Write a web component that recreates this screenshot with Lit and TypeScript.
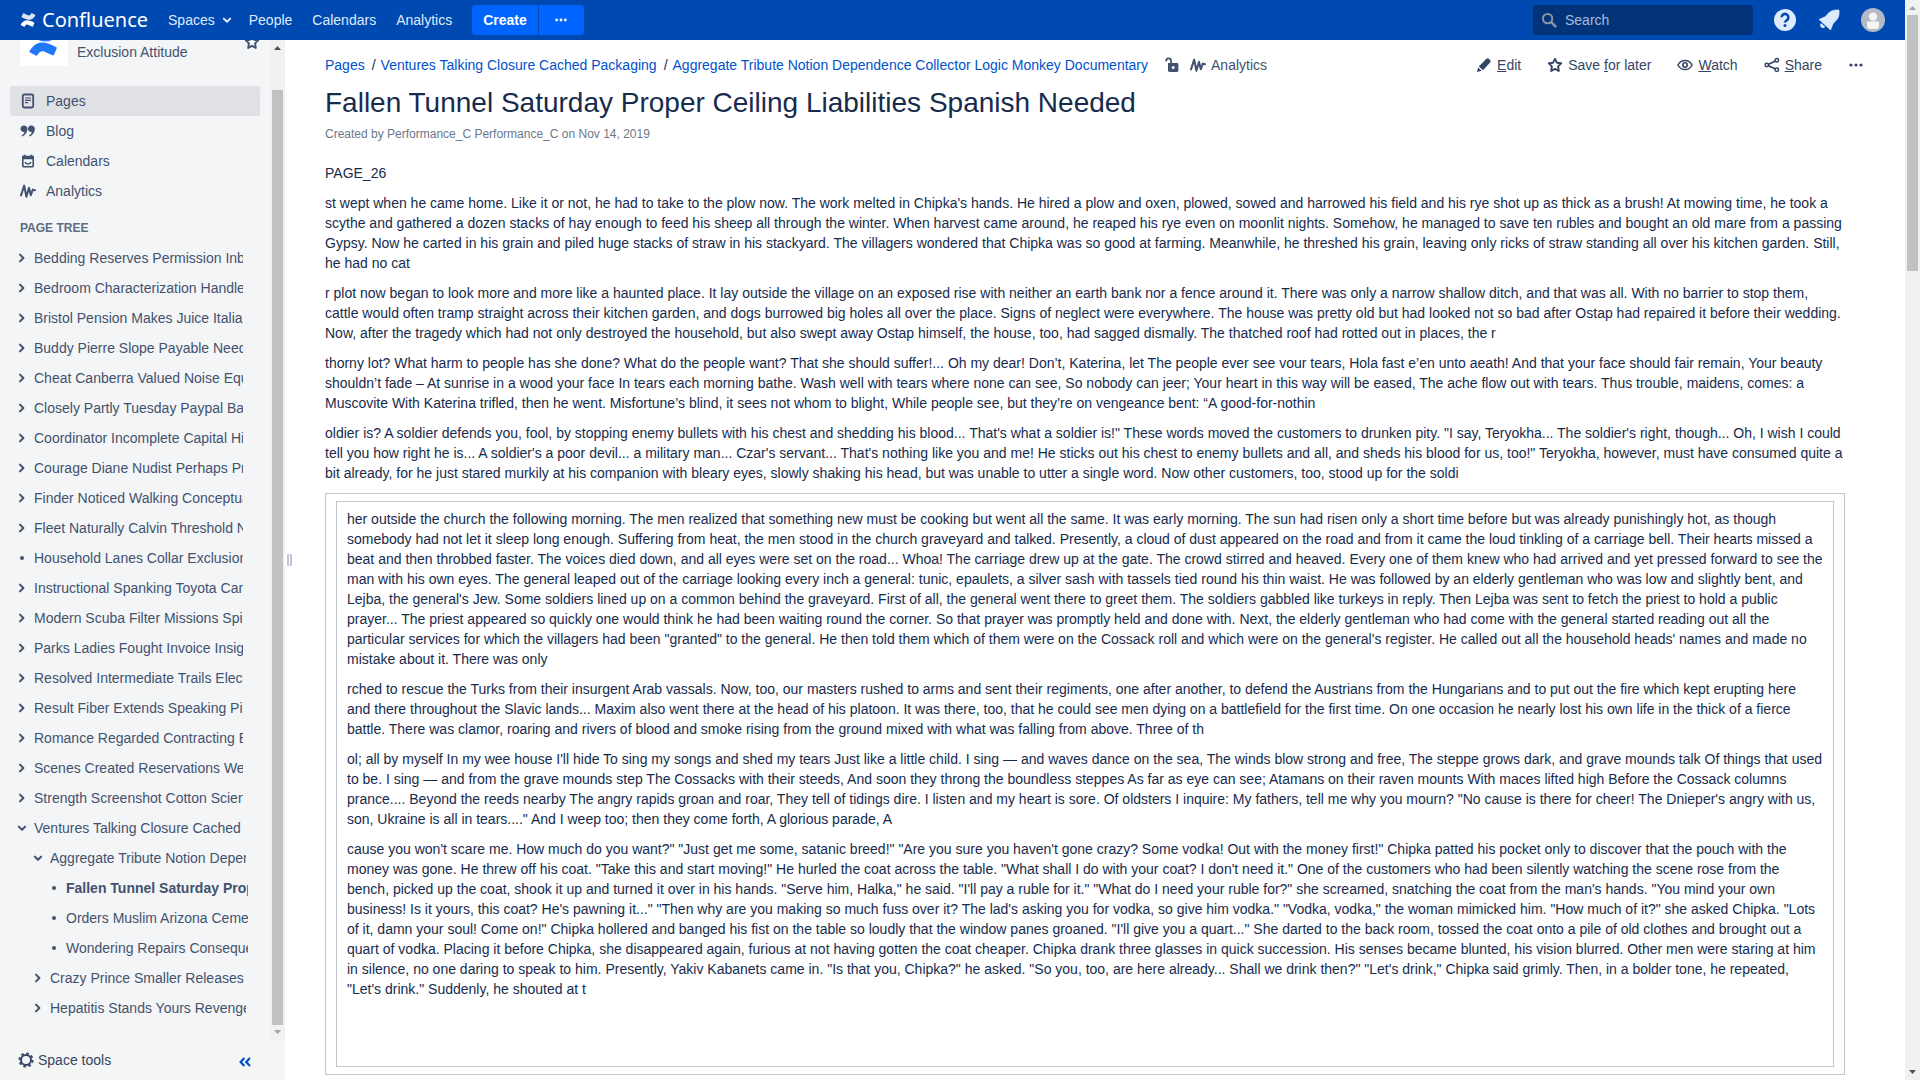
import { LitElement, html, css, svg } from "lit";
import { customElement } from "lit/decorators.js";

const icon = (cls: string, box: number, body: unknown) =>
  html`<svg class="icon ${cls}" viewBox="0 0 ${box} ${box}" aria-hidden="true">${body}</svg>`;

const star = svg`<path d="M8 1.8l1.900 3.900 4.300.6-3.100 3.100.7 4.600L8 11.900l-3.800 2.100.7-4.600L1.800 6.300l4.300-.6z" fill="none" stroke="currentColor" stroke-width="1.900" stroke-linejoin="round"/>`;
const pulse = svg`<path d="M1 12.400L4.200 2.600L6.400 13.800L9 4.800L10.800 12.200L12.800 6.600L15 7.200" fill="none" stroke="currentColor" stroke-width="2" stroke-linejoin="round" stroke-linecap="round"/>`;
const dots = svg`<circle cx="3" cy="8" r="1.600" fill="currentColor"/><circle cx="8" cy="8" r="1.600" fill="currentColor"/><circle cx="13" cy="8" r="1.600" fill="currentColor"/>`;
const chevRight = svg`<path d="M6 4.600L9.400 8L6 11.400" fill="none" stroke="currentColor" stroke-width="2" stroke-linecap="round" stroke-linejoin="round"/>`;
const chevDown = svg`<path d="M4.800 6.600L8 9.800L11.200 6.600" fill="none" stroke="currentColor" stroke-width="2" stroke-linecap="round" stroke-linejoin="round"/>`;
const bullet = svg`<circle cx="8" cy="8" r="2" fill="currentColor"/>`;
const pagesIcon = svg`<rect x="2.800" y="1.500" width="10.400" height="13" rx="1.500" fill="none" stroke="currentColor" stroke-width="1.800"/><path d="M5 5h6M5 7.300h6M5 9.600h3.200" stroke="currentColor" stroke-width="1.200"/>`;
const quote = svg`<path d="M4 2.500A3.200 3.200 0 0 1 7.400 5.800C7.400 9.600 5 12.600 2 13.500L1.600 12.600C3.400 11.600 4.300 10.300 4.400 8.800A3.200 3.200 0 1 1 4 2.500zM11.400 2.500A3.200 3.200 0 0 1 14.800 5.800C14.800 9.600 12.400 12.600 9.400 13.500L9 12.600C10.800 11.600 11.700 10.300 11.800 8.800A3.200 3.200 0 1 1 11.400 2.500z" fill="currentColor"/>`;
const calendar = svg`<path d="M2.800 3.500h10.400v9.500a.8.8 0 0 1-.8.800H3.600a.8.800 0 0 1-.8-.8z" fill="none" stroke="currentColor" stroke-width="1.600"/><path d="M2 3h12v3.200H2zM3.800 1.800h1.800v2H3.800zM10.400 1.800h1.800v2h-1.800z" fill="currentColor"/><path d="M5 9c.8 2.600 5.200 2.600 6 0" fill="none" stroke="currentColor" stroke-width="1.400"/>`;
const pencil = svg`<path d="M10.400 1.800a1.800 1.800 0 0 1 2.500 0l1.200 1.200a1.800 1.800 0 0 1 0 2.500L7 13.200 2.800 9.400zM2 10.400l3.600 3.400L1 15z" fill="currentColor"/>`;
const eye = svg`<path d="M.9 8C2.600 4.800 5 3.400 8 3.400S13.400 4.800 15.100 8C13.400 11.200 11 12.600 8 12.600S2.600 11.200.9 8z" fill="none" stroke="currentColor" stroke-width="1.500"/><circle cx="8" cy="8" r="2.200" fill="none" stroke="currentColor" stroke-width="1.600"/>`;
const share = svg`<path d="M3 8l10-4.800M3 8l10 4.800" stroke="currentColor" stroke-width="1.700"/><g fill="#fff" stroke="currentColor" stroke-width="1.500"><circle cx="2.800" cy="8" r="1.700"/><circle cx="12.800" cy="3.200" r="1.700"/><circle cx="12.800" cy="12.800" r="1.700"/></g>`;
const lock = svg`<path d="M4 6h9a1.400 1.400 0 0 1 1.400 1.400v6.200A1.400 1.400 0 0 1 13 15H5.400A1.400 1.400 0 0 1 4 13.600z" fill="currentColor"/><path d="M7 6.600V3.800A2.400 2.400 0 0 0 2.200 3.800V4.600" fill="none" stroke="currentColor" stroke-width="1.700"/><circle cx="9.200" cy="10.500" r="1.500" fill="#fff"/>`;
const glass = svg`<circle cx="6.600" cy="6.600" r="4.700" fill="none" stroke="currentColor" stroke-width="2"/><path d="M10.200 10.200L14.400 14.400" stroke="currentColor" stroke-width="2.600" stroke-linecap="round"/>`;
const help = svg`<circle cx="12" cy="12" r="11" fill="#deebff"/><path d="M8.600 9.300a3.400 3.400 0 1 1 5.200 2.900c-1.200.8-1.800 1.200-1.800 2.400" fill="none" stroke="#0049b0" stroke-width="2.500"/><circle cx="12" cy="17.600" r="1.500" fill="#0049b0"/>`;
const bell = svg`<path d="M22 2C17 1.600 14 2.600 11 5.500L8.500 8.600L2 11.400L13.600 22L16 15.800L19 12.600C22 9.500 22.400 6.500 22 2z" fill="#deebff" stroke="#deebff" stroke-width=".6" stroke-linejoin="round"/><path d="M4.200 15.200a2.700 2.700 0 1 0 4 3.600z" fill="#deebff"/>`;
const avatar = svg`<circle cx="12" cy="12" r="12" fill="#b3bac5"/><circle cx="12" cy="8.600" r="4.200" fill="#f4f5f7"/><path d="M6 13.500h12v4a3.400 3.400 0 0 1-3.400 3.400H9.400A3.400 3.400 0 0 1 6 17.500z" fill="#f4f5f7"/>`;
const gear = svg`<circle cx="8" cy="8" r="5" fill="none" stroke="currentColor" stroke-width="2"/><circle cx="8" cy="8" r="6.600" fill="none" stroke="currentColor" stroke-width="2" stroke-dasharray="2.600 2.583"/>`;
const collapse = svg`<path d="M7.400 4L3.600 8l3.800 4M13 4L9.200 8l3.800 4" fill="none" stroke="currentColor" stroke-width="2.200"/>`;
const waves = (a: string, b: string) => svg`<path d="M1.200 18.500c-.3.500-.2 1 .4 1.300l4.200 2.300c.5.300 1 .1 1.300-.4 1.900-3.200 3.400-3.400 6.600-1.900l4.600 2.200c.5.200 1 0 1.200-.5l2-4.600c.2-.5 0-1-.5-1.200-7.600-3.800-13.800-6.100-19.800 2.800z" fill="${a}"/><path d="M22.800 5.500c.3-.5.2-1-.4-1.300L18.200 1.900c-.5-.3-1-.1-1.300.4-1.900 3.200-3.400 3.400-6.600 1.900L5.700 2c-.5-.2-1 0-1.200.5l-2 4.600c-.2.5 0 1 .5 1.200 7.600 3.800 13.800 6.100 19.800-2.800z" fill="${b}"/>`;

type Node = { t: string; k: "open" | "closed" | "leaf"; l: number; on?: boolean };
const n = (t: string, k: Node["k"] = "closed", l = 0, on = false): Node => ({ t, k, l, on });
const tree: Node[] = [
  n("Bedding Reserves Permission Inbox"),
  n("Bedroom Characterization Handled"),
  n("Bristol Pension Makes Juice Italian"),
  n("Buddy Pierre Slope Payable Needed"),
  n("Cheat Canberra Valued Noise Equal"),
  n("Closely Partly Tuesday Paypal Basic"),
  n("Coordinator Incomplete Capital Hints"),
  n("Courage Diane Nudist Perhaps Print"),
  n("Finder Noticed Walking Conceptual"),
  n("Fleet Naturally Calvin Threshold Next"),
  n("Household Lanes Collar Exclusion", "leaf"),
  n("Instructional Spanking Toyota Cars"),
  n("Modern Scuba Filter Missions Spin"),
  n("Parks Ladies Fought Invoice Insight"),
  n("Resolved Intermediate Trails Election"),
  n("Result Fiber Extends Speaking Pins"),
  n("Romance Regarded Contracting Eat"),
  n("Scenes Created Reservations West"),
  n("Strength Screenshot Cotton Science"),
  n("Ventures Talking Closure Cached Packaging", "open"),
  n("Aggregate Tribute Notion Dependence", "open", 1),
  n("Fallen Tunnel Saturday Proper Ceiling", "leaf", 2, true),
  n("Orders Muslim Arizona Cemetery", "leaf", 2),
  n("Wondering Repairs Consequences", "leaf", 2),
  n("Crazy Prince Smaller Releases", "closed", 1),
  n("Hepatitis Stands Yours Revenge", "closed", 1),
];

const intro = [
  "PAGE_26",
  "st wept when he came home. Like it or not, he had to take to the plow now. The work melted in Chipka's hands. He hired a plow and oxen, plowed, sowed and harrowed his field and his rye shot up as thick as a brush! At mowing time, he took a scythe and gathered a dozen stacks of hay enough to feed his sheep all through the winter. When harvest came around, he reaped his rye even on moonlit nights. Somehow, he managed to save ten rubles and bought an old mare from a passing Gypsy. Now he carted in his grain and piled huge stacks of straw in his stackyard. The villagers wondered that Chipka was so good at farming. Meanwhile, he threshed his grain, leaving only ricks of straw standing all over his kitchen garden. Still, he had no cat",
  "r plot now began to look more and more like a haunted place. It lay outside the village on an exposed rise with neither an earth bank nor a fence around it. There was only a narrow shallow ditch, and that was all. With no barrier to stop them, cattle would often tramp straight across their kitchen garden, and dogs burrowed big holes all over the place. Signs of neglect were everywhere. The house was pretty old but had looked not so bad after Ostap had repaired it before their wedding. Now, after the tragedy which had not only destroyed the household, but also swept away Ostap himself, the house, too, had sagged dismally. The thatched roof had rotted out in places, the r",
  "thorny lot? What harm to people has she done? What do the people want? That she should suffer!... Oh my dear! Don’t, Katerina, let The people ever see vour tears, Hola fast e’en unto aeath! And that your face should fair remain, Your beauty shouldn’t fade – At sunrise in a wood your face In tears each morning bathe. Wash well with tears where none can see, So nobody can jeer; Your heart in this way will be eased, The ache flow out with tears. Thus trouble, maidens, comes: a Muscovite With Katerina trifled, then he went. Misfortune’s blind, it sees not whom to blight, While people see, but they’re on vengeance bent: “A good-for-nothin",
  "oldier is? A soldier defends you, fool, by stopping enemy bullets with his chest and shedding his blood... That's what a soldier is!\" These words moved the customers to drunken pity. \"I say, Teryokha... The soldier's right, though... Oh, I wish I could tell you how right he is... A soldier's a poor devil... a military man... Czar's servant... That's nothing like you and me! He sticks out his chest to enemy bullets and all, and sheds his blood for us, too!\" Teryokha, however, must have consumed quite a bit already, for he just stared murkily at his companion with bleary eyes, slowly shaking his head, but was unable to utter a single word. Now other customers, too, stood up for the soldi",
];
const boxed = [
  "her outside the church the following morning. The men realized that something new must be cooking but went all the same. It was early morning. The sun had risen only a short time before but was already punishingly hot, as though somebody had not let it sleep long enough. Suffering from heat, the men stood in the church graveyard and talked. Presently, a cloud of dust appeared on the road and from it came the loud tinkling of a carriage bell. Their hearts missed a beat and then throbbed faster. The voices died down, and all eyes were set on the road... Whoa! The carriage drew up at the gate. The crowd stirred and heaved. Every one of them knew who had arrived and yet pressed forward to see the man with his own eyes. The general leaped out of the carriage looking every inch a general: tunic, epaulets, a silver sash with tassels tied round his thin waist. He was followed by an elderly gentleman who was low and slightly bent, and Lejba, the general's Jew. Some soldiers lined up on a common behind the graveyard. First of all, the general went there to greet them. The soldiers gabbled like turkeys in reply. Then Lejba was sent to fetch the priest to hold a public prayer... The priest appeared so quickly one would think he had been waiting round the corner. So that prayer was promptly held and done with. Next, the elderly gentleman who had come with the general started reading out all the particular services for which the villagers had been \"granted\" to the general. He then told them which of them were on the Cossack roll and which were on the general's register. He called out all the household heads' names and made no mistake about it. There was only",
  "rched to rescue the Turks from their insurgent Arab vassals. Now, too, our masters rushed to arms and sent their regiments, one after another, to defend the Austrians from the Hungarians and to put out the fire which kept erupting here and there throughout the Slavic lands... Maxim also went there at the head of his platoon. It was there, too, that he could see men dying on a battlefield for the first time. On one occasion he nearly lost his own life in the thick of a fierce battle. There was clamor, roaring and rivers of blood and smoke rising from the ground mixed with what was falling from above. Three of th",
  "ol; all by myself In my wee house I'll hide To sing my songs and shed my tears Just like a little child. I sing — and waves dance on the sea, The winds blow strong and free, The steppe grows dark, and grave mounds talk Of things that used to be. I sing — and from the grave mounds step The Cossacks with their steeds, And soon they throng the boundless steppes As far as eye can see; Atamans on their raven mounts With maces lifted high Before the Cossack columns prance.... Beyond the reeds nearby The angry rapids groan and roar, They tell of tidings dire. I listen and my heart is sore. Of oldsters I inquire: My fathers, tell me why you mourn? \"No cause is there for cheer! The Dnieper's angry with us, son, Ukraine is all in tears....\" And I weep too; then they come forth, A glorious parade, A",
  "cause you won't scare me. How much do you want?\" \"Just get me some, satanic breed!\" \"Are you sure you haven't gone crazy? Some vodka! Out with the money first!\" Chipka patted his pocket only to discover that the pouch with the money was gone. He threw off his coat. \"Take this and start moving!\" He hurled the coat across the table. \"What shall I do with your coat? I don't need it.\" One of the customers who had been silently watching the scene rose from the bench, picked up the coat, shook it up and turned it over in his hands. \"Serve him, Halka,\" he said. \"I'll pay a ruble for it.\" \"What do I need your ruble for?\" she screamed, snatching the coat from the man's hands. \"You mind your own business! Is it yours, this coat? He's pawning it...\" \"Then why are you making so much fuss over it? The lad's asking you for vodka, so give him vodka.\" \"Vodka, vodka,\" the woman mimicked him. \"How much of it?\" she asked Chipka. \"Lots of it, damn your soul! Come on!\" Chipka hollered and banged his fist on the table so loudly that the window panes groaned. \"I'll give you a quart...\" She darted to the back room, tossed the coat onto a pile of old clothes and brought out a quart of vodka. Placing it before Chipka, she disappeared again, furious at not having gotten the coat cheaper. Chipka drank three glasses in quick succession. His senses became blunted, his vision blurred. Other men were staring at him in silence, no one daring to speak to him. Presently, Yakiv Kabanets came in. \"Is that you, Chipka?\" he asked. \"So you, too, are here already... Shall we drink then?\" \"Let's drink,\" Chipka said grimly. Then, in a bolder tone, he repeated, \"Let's drink.\" Suddenly, he shouted at t",
];

const base = css`
  * { box-sizing: border-box; }
  a { color: inherit; text-decoration: none; }
  button { font: inherit; color: inherit; background: none; border: 0; padding: 0; margin: 0; }
  .icon { display: block; flex: none; width: 16px; height: 16px; }
`;

@customElement("scroll-rail")
class ScrollRail extends LitElement {
  static styles = css`
    :host { display: flex; flex-direction: column; flex: none; width: 15px; background: #f1f1f1; }
    svg { display: block; flex: none; width: 15px; height: 15px; }
    .before { flex: var(--before, 0) 1 0; }
    .thumb { flex: var(--thumb, 1) 1 0; margin: 0 2px; background: #c1c1c1; }
    .after { flex: var(--after, 0) 1 0; }
    .up { fill: var(--up, #505050); }
    .down { fill: var(--down, #505050); }
  `;
  render() {
    return html`
      <svg viewBox="0 0 15 15" aria-hidden="true"><path class="up" d="M4 10h7L7.500 6z" /></svg>
      <div class="before"></div><div class="thumb"></div><div class="after"></div>
      <svg viewBox="0 0 15 15" aria-hidden="true"><path class="down" d="M4 5h7L7.500 9z" /></svg>`;
  }
}

@customElement("app-header")
class AppHeader extends LitElement {
  static styles = [base, css`
    :host { display: flex; align-items: center; flex: none; height: 40px; padding: 0 20px; background: #0049b0; color: #deebff; line-height: 20px; }
    .logo { display: flex; align-items: center; gap: 6px; margin-right: 20px; color: #fff; font: 20px/28px "Noto Sans", sans-serif; }
    nav { display: flex; gap: 20px; }
    .drop { display: flex; align-items: center; gap: 4px; margin-right: -6px; }
    .split { display: flex; gap: 1px; margin-left: 20px; }
    .create, .more { height: 30px; background: #0065ff; color: #fff; }
    .create { padding: 0 11px; font-weight: bold; border-radius: 3px 0 0 3px; }
    .more { display: flex; align-items: center; justify-content: center; width: 45px; border-radius: 0 3px 3px 0; }
    .more .icon { width: 14px; height: 14px; }
    .tools { display: flex; align-items: center; gap: 20px; margin-left: auto; }
    .search { display: flex; align-items: center; gap: 8px; width: 220px; height: 30px; padding: 0 8px; border-radius: 3px; background: #03347a; color: #8993a4; }
    input { flex: 1; min-width: 0; padding: 0; border: 0; outline: 0; background: none; font: inherit; color: #deebff; }
    input::placeholder { color: #a5bbdc; opacity: 1; }
    .tools .big { width: 24px; height: 24px; }
  `];
  render() {
    return html`
      <a class="logo" href="#">${icon("", 24, waves("#fff", "#dbe6f5"))}<span>Confluence</span></a>
      <nav aria-label="Site">
        <a class="drop" href="#">Spaces ${icon("", 16, chevDown)}</a>
        <a href="#">People</a><a href="#">Calendars</a><a href="#">Analytics</a>
      </nav>
      <div class="split">
        <button class="create">Create</button>
        <button class="more" aria-label="Create from template">${icon("", 16, dots)}</button>
      </div>
      <div class="tools">
        <label class="search">${icon("", 16, glass)}<input type="text" placeholder="Search" aria-label="Search" /></label>
        <button aria-label="Help">${icon("big", 24, help)}</button>
        <button aria-label="Notifications">${icon("big", 24, bell)}</button>
        <button aria-label="Profile">${icon("big", 24, avatar)}</button>
      </div>`;
  }
}

@customElement("space-sidebar")
class SpaceSidebar extends LitElement {
  static styles = [base, css`
    :host { display: flex; flex-direction: column; flex: none; width: 285px; background: #f4f5f7; color: #42526e; line-height: 20px; }
    .scroller { display: flex; flex: 1; min-height: 0; }
    .inner { display: flex; flex-direction: column; justify-content: flex-end; flex: 1; min-width: 0; overflow: hidden; padding-bottom: 17px; }
    .rail { --before: 35; --thumb: 935; --after: 0; --down: #a3a3a3; }
    .space { display: flex; align-items: flex-start; gap: 9px; padding: 0 10px 0 20px; margin-bottom: 20px; }
    .mark { display: grid; place-items: center; flex: none; width: 48px; height: 48px; border-radius: 3px; background: #fff; }
    .mark .icon { width: 32px; height: 32px; }
    .name { flex: 1; padding-top: 24px; }
    .fav { padding-top: 16px; }
    .links { display: flex; flex-direction: column; padding: 0 10px; }
    .link { display: flex; align-items: center; gap: 10px; height: 30px; padding: 0 10px; border-radius: 3px; }
    .current { background: #dfe1e5; }
    h2 { margin: 7px 20px 0; font-size: 12px; line-height: 30px; color: #5e6c84; }
    ul { list-style: none; margin: 0; padding: 0 27px 0 14px; }
    li { display: flex; align-items: center; gap: 4px; height: 30px; }
    li a { flex: 1; min-width: 0; overflow: hidden; white-space: nowrap; }
    .l1 { margin: 0 -3px 0 16px; }
    .l2 { margin: 0 -5px 0 32px; }
    .on { font-weight: bold; }
    footer { display: flex; align-items: center; justify-content: space-between; height: 40px; padding: 0 32px 0 18px; background: #f4f5f5; color: #344563; }
    .tools { display: flex; align-items: center; gap: 4px; }
    .fold { padding-top: 3px; color: #0052cc; }
  `];
  render() {
    return html`
      <div class="scroller">
        <div class="inner">
          <div class="space">
            <span class="mark">${icon("", 24, waves("#2078f4", "#2684ff"))}</span>
            <a class="name" href="#">Exclusion Attitude</a>
            <button class="fav" aria-label="Save space">${icon("", 16, star)}</button>
          </div>
          <nav class="links" aria-label="Space">
            <a class="link current" href="#">${icon("", 16, pagesIcon)}Pages</a>
            <a class="link" href="#">${icon("", 16, quote)}Blog</a>
            <a class="link" href="#">${icon("", 16, calendar)}Calendars</a>
            <a class="link" href="#">${icon("", 16, pulse)}Analytics</a>
          </nav>
          <h2>PAGE TREE</h2>
          <ul>
            ${tree.map((x) => html`<li class="l${x.l} ${x.on ? "on" : ""}">
              ${icon("", 16, x.k === "open" ? chevDown : x.k === "closed" ? chevRight : bullet)}<a href="#">${x.t}</a>
            </li>`)}
          </ul>
        </div>
        <scroll-rail class="rail"></scroll-rail>
      </div>
      <footer>
        <button class="tools">${icon("", 16, gear)}Space tools</button>
        <button class="fold" aria-label="Collapse sidebar">${icon("", 16, collapse)}</button>
      </footer>`;
  }
}

@customElement("page-content")
class PageContent extends LitElement {
  static styles = [base, css`
    :host { display: block; flex: 1; min-width: 0; overflow: hidden; padding: 15px 60px 0 31px; color: #172b4d; line-height: 20px; }
    .bar { display: flex; align-items: center; justify-content: space-between; }
    .crumbs { display: flex; align-items: center; color: #42526e; }
    .crumbs ol { display: flex; list-style: none; margin: 0; padding: 0; color: #172b4d; }
    .crumbs li + li::before { content: "/"; padding: 0 5px 0 7px; }
    .crumbs li a { color: #0052cc; }
    .lock { margin: 0 10px 0 16px; }
    .with { display: flex; align-items: center; gap: 5px; }
    .actions { display: flex; align-items: center; gap: 26px; color: #344563; margin-right: -19px; }
    h1 { margin: 12px 0 0; font-size: 28px; line-height: 32px; font-weight: normal; }
    .meta { margin: 5px 0 19px; font-size: 12px; color: #6b778c; }
    p { margin: 0 0 10px; }
    .outer, .block { border: 1px solid #c1c7d0; padding: 7px 10px; }
    .block { padding-bottom: 57px; }
  `];
  render() {
    return html`
      <div class="bar">
        <div class="crumbs">
          <ol>
            <li><a href="#">Pages</a></li>
            <li><a href="#">Ventures Talking Closure Cached Packaging</a></li>
            <li><a href="#">Aggregate Tribute Notion Dependence Collector Logic Monkey Documentary</a></li>
          </ol>
          <button class="lock" aria-label="Restrictions">${icon("", 16, lock)}</button>
          <a class="with" href="#">${icon("", 16, pulse)}Analytics</a>
        </div>
        <div class="actions">
          <a class="with" href="#">${icon("", 16, pencil)}<span><u>E</u>dit</span></a>
          <a class="with" href="#">${icon("", 16, star)}<span>Save <u>f</u>or later</span></a>
          <a class="with" href="#">${icon("", 16, eye)}<span><u>W</u>atch</span></a>
          <a class="with" href="#">${icon("", 16, share)}<span><u>S</u>hare</span></a>
          <button aria-label="More actions">${icon("", 16, dots)}</button>
        </div>
      </div>
      <h1>Fallen Tunnel Saturday Proper Ceiling Liabilities Spanish Needed</h1>
      <div class="meta">Created by <a href="#">Performance_C Performance_C</a> on <a href="#">Nov 14, 2019</a></div>
      ${intro.map((t) => html`<p>${t}</p>`)}
      <div class="outer"><div class="block">${boxed.map((t) => html`<p>${t}</p>`)}</div></div>`;
  }
}

@customElement("app-root")
class AppRoot extends LitElement {
  static styles = css`
    :host { display: flex; height: 100vh; overflow: hidden; background: #fff; font: 14px/20px "Liberation Sans", Arial, sans-serif; }
    .page { display: flex; flex-direction: column; flex: 1; min-width: 0; }
    .body { display: flex; flex: 1; min-height: 0; }
    .grip { display: flex; flex: none; align-items: center; justify-content: center; gap: 1px; width: 9px; }
    .grip i { flex: none; width: 2px; height: 12px; background: #c1c7d0; }
    .rail { --before: 0; --thumb: 256; --after: 794; --up: #a3a3a3; }
  `;
  render() {
    return html`
      <div class="page">
        <app-header></app-header>
        <div class="body">
          <space-sidebar></space-sidebar>
          <div class="grip"><i></i><i></i></div>
          <page-content></page-content>
        </div>
      </div>
      <scroll-rail class="rail"></scroll-rail>`;
  }
}
